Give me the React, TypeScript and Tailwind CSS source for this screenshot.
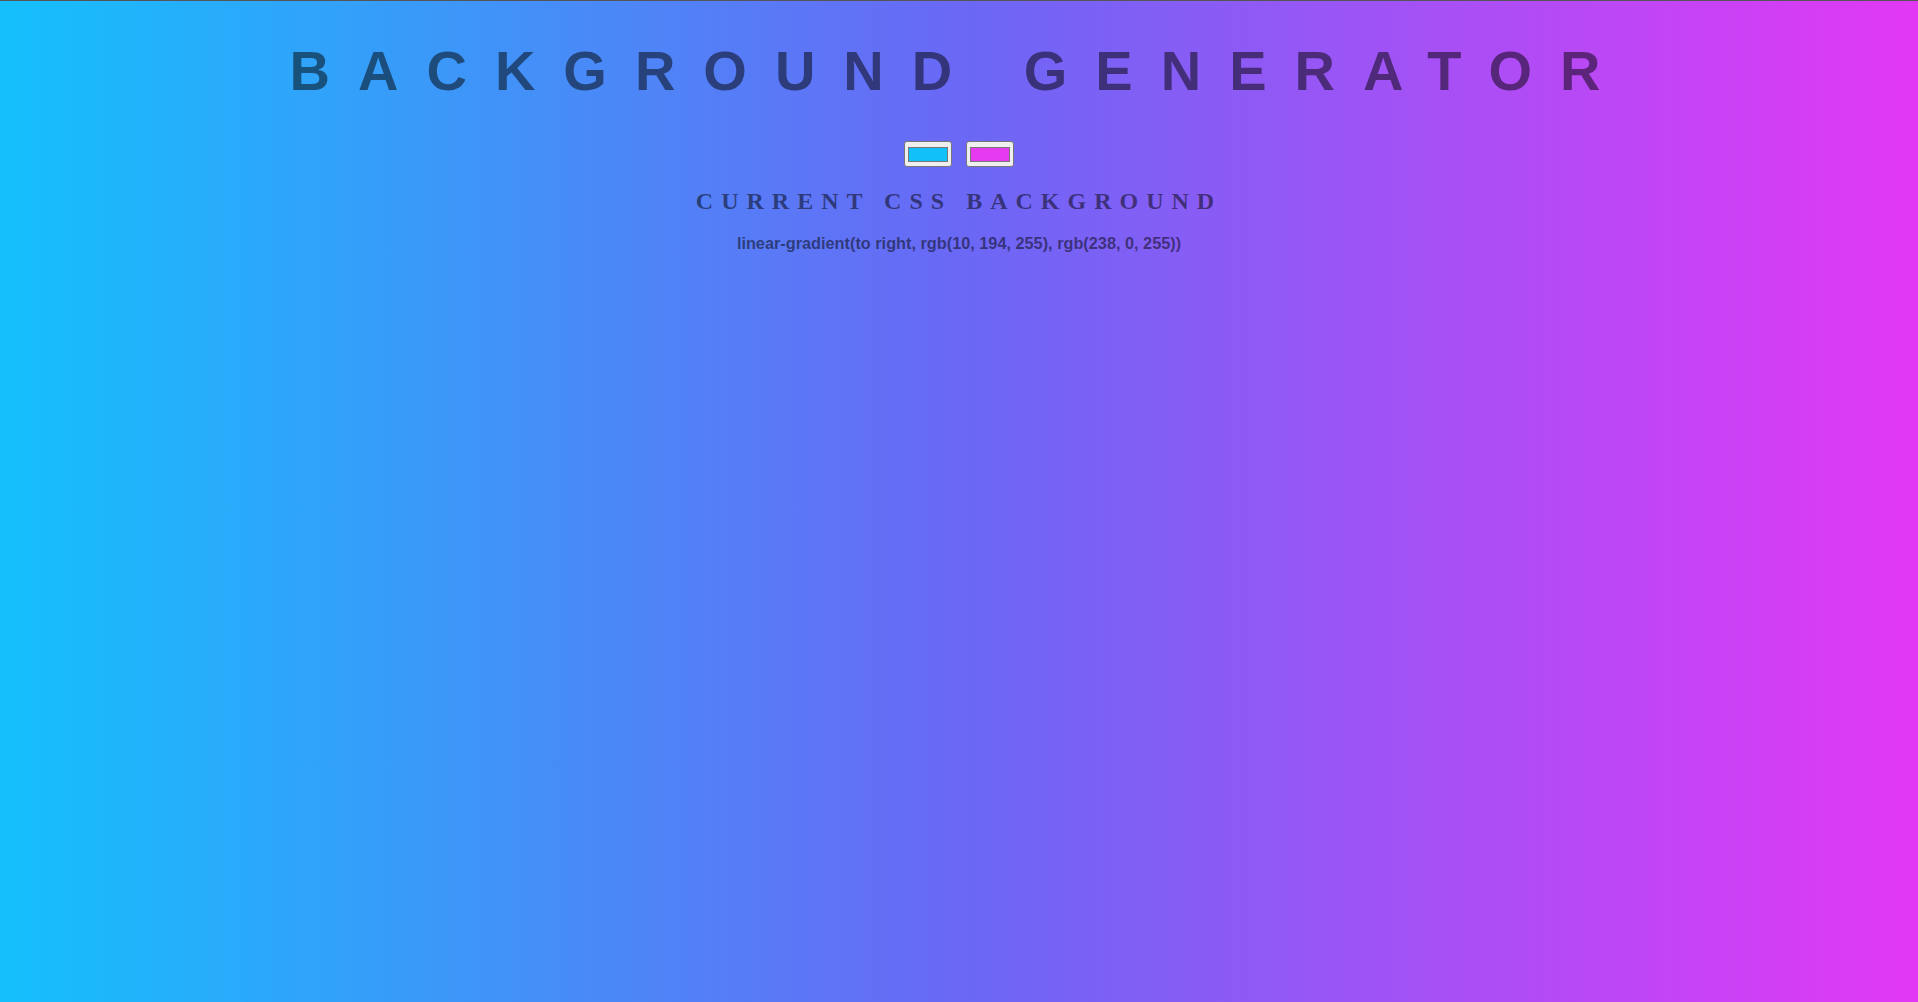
const TITLE = 'Background Generator'
const CURRENT = 'linear-gradient(to right, rgb(10, 194, 255), rgb(238, 0, 255))'

function Swatch({ color }: { color: string }) {
  return (
    <div className="flex h-[26px] w-[48px] items-center justify-center rounded-[3px] border border-[#767676] bg-[#efefef]">
      <div className="h-[15px] w-[40px] border border-[#777777]" style={{ background: color }} />
    </div>
  )
}

export default function App() {
  return (
    <div className="flex min-h-screen flex-col items-center border-t border-[#555555] bg-[linear-gradient(to_right,rgb(20,192,252),rgb(106,104,245)_50%,rgb(226,56,245))] text-center text-black/50">
      {/* title */}
      <h1 className="mt-[42px] font-['Liberation_Sans',Arial,sans-serif] text-[56px] font-bold uppercase leading-none tracking-[28px]">
        {TITLE}
      </h1>

      {/* pickers */}
      <div className="mt-[42px] flex gap-[14px]">
        <Swatch color="rgb(18, 192, 248)" />
        <Swatch color="rgb(230, 58, 240)" />
      </div>

      <h3 className="mt-[22px] font-['Liberation_Serif','Times_New_Roman',serif] text-[24px] font-bold uppercase leading-none tracking-[8px]">
        Current CSS Background
      </h3>

      <p className="mt-[22px] font-['Liberation_Sans',Arial,sans-serif] text-[16.3px] font-bold leading-none">
        {CURRENT}
      </p>
    </div>
  )
}
